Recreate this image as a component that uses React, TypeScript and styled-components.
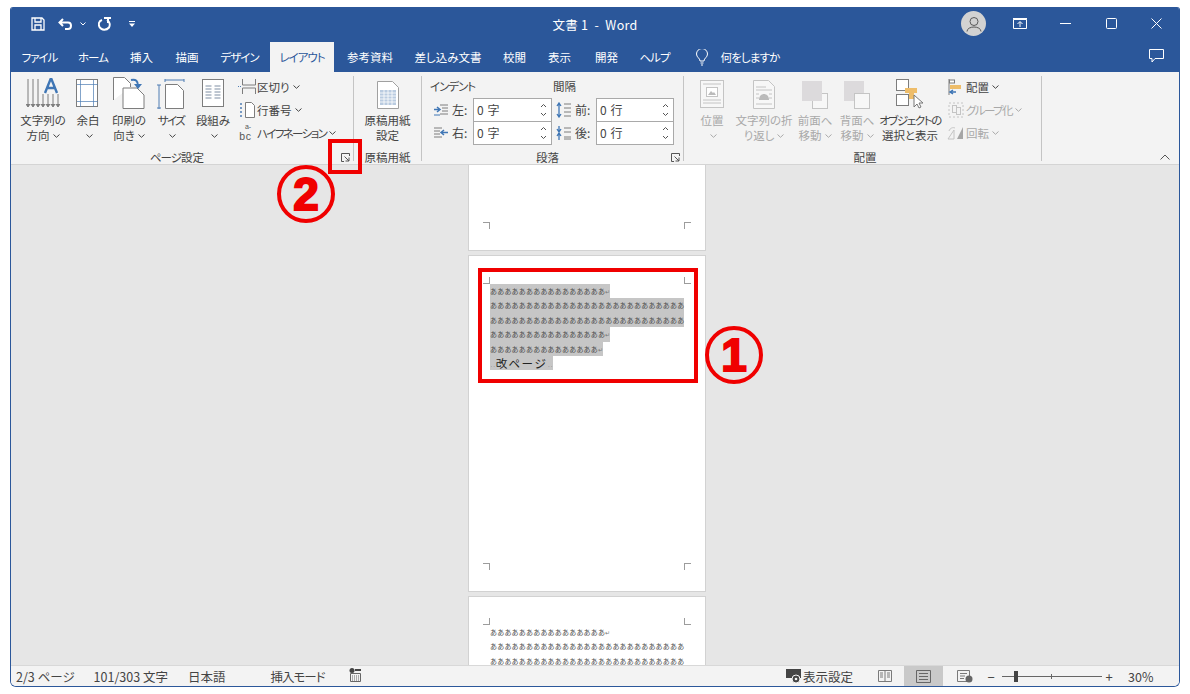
import React from "react";
import styled, { createGlobalStyle } from "styled-components";

const GlobalStyle = createGlobalStyle`
  html, body {
    margin: 0;
    background: #fff;
  }
  body {
    font-family: "Noto Sans CJK JP", "Liberation Sans", sans-serif;
    font-feature-settings: "palt";
    color: #444;
  }
`;

const Page = styled.div`
  width: 1190px;
  height: 694px;
  padding: 7px 10px 8px;
  box-sizing: border-box;
  position: relative;
  overflow: hidden;
`;

const Window = styled.div`
  height: 100%;
  display: flex;
  flex-direction: column;
  border: 1px solid #2b579a;
  border-top: 0;
  border-radius: 3px 3px 6px 6px;
  overflow: hidden;
`;

const TitleBar = styled.div`
  height: 33px;
  background: #2b579a;
  color: #fff;
  display: grid;
  grid-template-columns: 1fr auto 1fr;
  align-items: center;
  flex: none;
`;

const Qat = styled.div`
  display: flex;
  align-items: center;
  padding-left: 15px;
`;

const QatSlot = styled.div<{ $w: number }>`
  width: ${(p) => p.$w}px;
  display: flex;
  justify-content: center;
  align-items: center;
`;

const Title = styled.div`
  font-size: 12.5px;
  letter-spacing: 0.3px;
  white-space: pre;
  position: relative;
  top: 1px;
`;

const WinControls = styled.div`
  display: flex;
  justify-content: flex-end;
  align-items: center;
`;

const WinSlot = styled.div<{ $w: number }>`
  width: ${(p) => p.$w}px;
  display: flex;
  justify-content: center;
  align-items: center;
`;

const Avatar = styled.div`
  width: 25px;
  height: 25px;
  margin-right: 11px;
  border-radius: 50%;
  background: #d2d2d2;
  display: flex;
  align-items: center;
  justify-content: center;
`;

const TabBar = styled.div`
  height: 32px;
  background: #2b579a;
  display: flex;
  align-items: flex-end;
  flex: none;
  color: #fff;
  font-size: 11.5px;
`;

const Tab = styled.div<{ $active?: boolean; $w: number }>`
  width: ${(p) => p.$w}px;
  height: 30px;
  box-sizing: border-box;
  display: flex;
  align-items: center;
  justify-content: center;
  white-space: nowrap;
  flex: none;
  background: ${(p) => (p.$active ? "#f3f3f3" : "transparent")};
  color: ${(p) => (p.$active ? "#2b579a" : "#fff")};
`;

const BulbTab = styled(Tab)`
  padding-left: 8px;
`;

const CommentSlot = styled.div`
  margin-left: auto;
  width: 46px;
  height: 32px;
  display: flex;
  align-items: center;
  justify-content: center;
  align-self: flex-start;
`;

const Kana = styled.span<{ $s?: number }>`
  letter-spacing: ${(p) => p.$s ?? -1}px;
`;

const Ribbon = styled.div`
  height: 93px;
  flex: none;
  background: #f3f3f3;
  border-bottom: 1px solid #d4d4d4;
  box-sizing: border-box;
  display: flex;
  font-size: 11.5px;
`;

const Group = styled.div<{ $w: number; $pad?: number }>`
  width: ${(p) => p.$w}px;
  flex: none;
  box-sizing: border-box;
  margin: 4px 0 3px;
  padding-left: ${(p) => p.$pad ?? 0}px;
  border-right: 1px solid #c4c4c4;
  display: flex;
  flex-direction: column;
  position: relative;
`;

const GroupBody = styled.div`
  flex: 1;
  display: flex;
  min-height: 0;
`;

const GroupLabel = styled.div<{ $launcher?: boolean }>`
  height: 14px;
  line-height: 14px;
  margin-bottom: -3px;
  text-align: center;
  padding-right: ${(p) => (p.$launcher ? 18 : 0)}px;
  white-space: nowrap;
`;

const Launcher = styled.svg`
  position: absolute;
  right: 3px;
  bottom: -1px;
  width: 9px;
  height: 9px;
`;

const CollapseBtn = styled.svg`
  width: 10px;
  height: 6px;
  margin: auto 9px 4px auto;
`;

const Large = styled.div<{ $w: number; $off?: boolean }>`
  width: ${(p) => p.$w}px;
  flex: none;
  display: flex;
  flex-direction: column;
  align-items: center;
  color: ${(p) => (p.$off ? "#a9a9a9" : "#444")};
`;

const IconSlot = styled.div`
  height: 36px;
  box-sizing: border-box;
  padding-bottom: 3px;
  display: flex;
  align-items: flex-end;
  justify-content: center;
`;

const LargeLabel = styled.div`
  margin-top: 1px;
  line-height: 15px;
  text-align: center;
  white-space: nowrap;
`;

const ChevronSvg = styled.svg`
  width: 7px;
  height: 4px;
  margin-left: 3px;
  vertical-align: 2px;
`;

const SmallStack = styled.div<{ $left: number }>`
  margin-left: ${(p) => p.$left}px;
  margin-top: -1px;
  display: flex;
  flex-direction: column;
`;

const SmallRow = styled.div<{ $off?: boolean }>`
  height: 23px;
  display: flex;
  align-items: center;
  white-space: nowrap;
  color: ${(p) => (p.$off ? "#a9a9a9" : "#444")};
`;

const SmallIcon = styled.div`
  width: 20px;
  flex: none;
  display: flex;
  align-items: center;
  justify-content: center;
`;

const HyphenMark = styled.div`
  width: 17px;
  margin-right: 3px;
  display: flex;
  flex-direction: column;
  align-items: center;
  font-family: "Liberation Sans", sans-serif;
  color: #555;
`;

const HyphenTop = styled.span`
  font-size: 7px;
  margin-left: 5px;
`;

const HyphenBottom = styled.span`
  font-size: 10.5px;
  letter-spacing: 0.8px;
`;

const ParaGrid = styled.div`
  display: grid;
  grid-template-columns: 123px 121px;
  grid-template-rows: 22px 23px 23px;
`;

const ParaHead = styled.div`
  line-height: 21px;
`;

const ParaCell = styled.div`
  display: flex;
  align-items: center;
`;

const ParaIcon = styled.div`
  width: 22px;
  flex: none;
  display: flex;
  justify-content: center;
`;

const ParaName = styled.div`
  width: 21px;
  flex: none;
  font-size: 12px;
`;

const Field = styled.div<{ $w: number }>`
  width: ${(p) => p.$w}px;
  height: 24px;
  box-sizing: border-box;
  border: 1px solid #a9a9a9;
  background: #fff;
  display: flex;
  align-items: center;
  padding: 0 3px 0 3px;
  font-size: 12px;
  letter-spacing: 0.6px;
`;

const Spin = styled.svg`
  margin-left: auto;
  margin-right: 1px;
  width: 7px;
  height: 16px;
`;

const DocArea = styled.div`
  flex: 1;
  min-height: 0;
  background: #e6e6e6;
  overflow: hidden;
  display: flex;
  flex-direction: column;
  align-items: center;
  padding: 0 16px 0 0;
  gap: 6px;
`;

const Sheet = styled.div<{ $h?: number }>`
  width: 236px;
  flex: none;
  height: ${(p) => (p.$h ? `${p.$h}px` : "auto")};
  box-sizing: border-box;
  background: #fff;
  outline: 1px solid #d2d2d2;
  position: relative;
`;

const SheetText = styled.div<{ $top: number }>`
  padding: ${(p) => p.$top}px 0 0 21px;
`;

const TextLine = styled.div<{ $sel?: boolean }>`
  width: fit-content;
  max-width: 195px;
  height: 14.4px;
  line-height: 14.4px;
  font-size: 7px;
  letter-spacing: 0.2px;
  font-feature-settings: normal;
  white-space: nowrap;
  color: #4a4a4a;
  background: ${(p) => (p.$sel ? "#c6c6c6" : "transparent")};
`;

const BreakText = styled.span`
  font-size: 11.5px;
  letter-spacing: 1.5px;
  color: #222;
`;

const BreakDots = styled.span`
  font-size: 5px;
  letter-spacing: 0;
  color: #666;
`;

const ReturnMark = styled.span`
  font-size: 6px;
  color: #777;
`;

const Crop = styled.i<{ $pos: "tl" | "tr" | "bl" | "br" }>`
  position: absolute;
  width: 7px;
  height: 7px;
  box-sizing: border-box;
  border: 0 solid #9c9c9c;
  ${(p) => (p.$pos[1] === "l" ? "left: 14px; border-right-width: 1px;" : "right: 14px; border-left-width: 1px;")}
  ${(p) => (p.$pos[0] === "t" ? "top: 21px; border-bottom-width: 1px;" : "bottom: 21px; border-top-width: 1px;")}
`;

const RedBox = styled.div`
  position: absolute;
  box-sizing: border-box;
  border: 4px solid #f00000;
  pointer-events: none;
`;

const PageBox = styled(RedBox)`
  left: 9px;
  top: 12px;
  width: 220px;
  height: 115px;
`;

const LauncherBox = styled(RedBox)`
  left: 328px;
  top: 139px;
  width: 34px;
  height: 35px;
`;

const Badge = styled.div<{ $x: number; $y: number }>`
  position: absolute;
  left: ${(p) => p.$x}px;
  top: ${(p) => p.$y}px;
  width: 58px;
  height: 58px;
  box-sizing: border-box;
  border: 4px solid #f00000;
  border-radius: 50%;
  display: flex;
  align-items: center;
  justify-content: center;
  color: #f00000;
  font-family: "Liberation Sans", sans-serif;
  font-weight: 700;
  font-size: 46px;
  -webkit-text-stroke: 2px #f00000;
`;

const StatusBar = styled.div`
  height: 21px;
  flex: none;
  background: #f3f3f3;
  border-top: 1px solid #d8d8d8;
  box-sizing: border-box;
  display: flex;
  align-items: center;
  font-size: 12.5px;
  color: #444;
`;

const StatusText = styled.div<{ $left: number; $right?: number }>`
  margin-left: ${(p) => p.$left}px;
  margin-right: ${(p) => p.$right ?? 0}px;
  white-space: nowrap;
`;

const StatusRight = styled.div`
  margin-left: auto;
  display: flex;
  align-items: center;
  height: 100%;
`;

const ViewBtn = styled.div<{ $active?: boolean; $w: number }>`
  width: ${(p) => p.$w}px;
  height: 100%;
  display: flex;
  align-items: center;
  justify-content: center;
  background: ${(p) => (p.$active ? "#c9c9c9" : "transparent")};
`;

const ZoomTrack = styled.div`
  width: 100px;
  height: 1px;
  background: #666;
  position: relative;
  margin: 0 1px 0 7px;
`;

const ZoomThumb = styled.i`
  position: absolute;
  left: 12px;
  top: -5px;
  width: 4px;
  height: 11px;
  background: #444;
`;

const ZoomTick = styled.i`
  position: absolute;
  left: 49px;
  top: -2px;
  width: 1px;
  height: 5px;
  background: #666;
`;

const ZoomSign = styled.div<{ $w: number }>`
  width: ${(p) => p.$w}px;
  text-align: center;
  font-size: 13px;
`;

const Percent = styled.div`
  width: 64px;
  padding-left: 13px;
  box-sizing: border-box;
  font-size: 12.5px;
`;

const Chevron = () => (
  <ChevronSvg viewBox="0 0 7 4">
    <path d="M.5.5 3.5 3.3 6.5.5" fill="none" stroke="currentColor" />
  </ChevronSvg>
);

const B = "#4f7db3";
const G = "#7d7d7d";
const D = "#c4c4c4";

const LauncherIcon = () => (
  <Launcher viewBox="0 0 9 9" fill="none" stroke="#555">
    <path d="M8.5 3V.5H.5v8H3" />
    <path d="M3.5 3.5 8 8M8 4.500V8H4.500" />
  </Launcher>
);

const TextDirIcon = () => (
  <svg width="34" height="31" viewBox="0 0 34 31" fill="none">
    <path d="M2 1v27M7 1v27M12 1v27M17 16v12M22 16v12M27 16v12M32 16v12" stroke={G} />
    <path d="M0 26l2 3 2-3M5 26l2 3 2-3M10 26l2 3 2-3M15 26l2 3 2-3M20 26l2 3 2-3M25 26l2 3 2-3M30 26l2 3 2-3" stroke={G} fill={G} />
    <path d="M19 15 25 0l6 15M21 10h8" stroke="#3f76b5" strokeWidth="2.4" />
  </svg>
);

const MarginIcon = () => (
  <svg width="24" height="30" viewBox="0 0 24 30" fill="none">
    <rect x=".5" y=".5" width="21" height="27" fill="#fff" stroke={G} />
    <path d="M4.500 1v27M17.500 1v27M1 5.500h21M1 22.500h21" stroke={B} strokeOpacity=".7" />
  </svg>
);

const OrientationIcon = () => (
  <svg width="32" height="32" viewBox="0 0 32 32" fill="none">
    <path d="M.5 23V.5h11l6 6V10" fill="#fff" stroke={G} />
    <path d="M10 31.500V11h14l7 7v13.500z" fill="#fff" stroke={G} />
    <path d="M18 3c5-1 7 1 7 6" stroke="#3f76b5" strokeWidth="2" />
    <path d="M21 7h8l-4 5z" fill="#3f76b5" />
  </svg>
);

const SizeIcon = () => (
  <svg width="28" height="30" viewBox="0 0 28 30" fill="none">
    <path d="M8.500 5.500h12l6 6v18h-18z" fill="#fff" stroke={G} />
    <path d="M8 1h19M8 0v3M27 0v3M2 6v24M0 6h4M0 29h4" stroke={B} />
  </svg>
);

const ColumnsIcon = () => (
  <svg width="22" height="30" viewBox="0 0 22 30" fill="none">
    <rect x=".5" y=".5" width="21" height="27" fill="#fff" stroke={G} />
    <path d="M3.500 7h6M12.500 7h6M3.500 10h6M12.500 10h6M3.500 13h6M12.500 13h6M3.500 16h6M12.500 16h6M3.500 19h6M12.500 19h6" stroke="#7f8ea3" />
  </svg>
);

const BreakIcon = () => (
  <svg width="18" height="16" viewBox="0 0 18 16" fill="none">
    <path d="M4.500 0v6h13V0M4.500 15V9h13v6" stroke={G} />
    <path d="M0 7.500h3" stroke={B} strokeDasharray="1 1" />
  </svg>
);

const LineNoIcon = () => (
  <svg width="16" height="16" viewBox="0 0 16 16" fill="none">
    <path d="M6.500.5h6l3 3v12h-9z" fill="#fff" stroke={G} />
    <path d="M2 1v2M2 5v2M2 9v2M2 13v2" stroke={B} strokeWidth="1.500" />
  </svg>
);

const GenkoIcon = () => (
  <svg width="22" height="28" viewBox="0 0 22 28">
    <path d="M.5.5h15l6 6v21H.5z" fill="#fff" stroke="#a0a0a0" />
    <path d="M3 9h16v15H3z" fill="#b9cbe0" />
    <path d="M3 12h16M3 15h16M3 18h16M3 21h16M7 9v15M11 9v15M15 9v15" stroke="#fff" strokeWidth=".8" />
  </svg>
);

const ParaArrow = ({ kind }: { kind: "left" | "right" | "before" | "after" }) => (
  <svg width="16" height="16" viewBox="0 0 16 16" fill="none">
    {kind === "left" && (
      <>
        <path d="M7 3h8M9 6h6M9 9h6M7 12h8" stroke={G} />
        <path d="M1 7.500h5M4 5l3 2.500L4 10" stroke="#3f76b5" strokeWidth="1.500" />
        <path d="M1 13h6" stroke="#3f76b5" />
      </>
    )}
    {kind === "right" && (
      <>
        <path d="M1 3h8M1 6h6M1 9h6M1 12h8" stroke={G} />
        <path d="M15 7.500h-6M11 5 8 7.500l3 2.500" stroke="#3f76b5" strokeWidth="1.500" />
      </>
    )}
    {kind === "before" && (
      <>
        <path d="M8 2h7M8 6h7M8 10h7M8 14h7" stroke={G} />
        <path d="M3 2v13M1 4l2-3 2 3M1 12l2 3 2-3" stroke="#3f76b5" strokeWidth="1.300" />
      </>
    )}
    {kind === "after" && (
      <>
        <path d="M8 3h7M8 7h7M8 12h7M8 14h7" stroke={G} />
        <path d="M3 1v5M3 9v6M1 4l2 3 2-3M1 11l2-3 2 3" stroke="#3f76b5" strokeWidth="1.300" />
      </>
    )}
  </svg>
);

const SpinIcon = () => (
  <Spin viewBox="0 0 7 16" fill="none" stroke="#555">
    <path d="M1 5 3.500 2.500 6 5M1 11l2.500 2.500L6 11" />
  </Spin>
);

const PositionIcon = () => (
  <svg width="24" height="29" viewBox="0 0 24 29" fill="none">
    <rect x=".5" y=".5" width="23" height="27" fill="#f7f7f7" stroke={D} />
    <path d="M3 4h18M3 20h18M3 23h18" stroke={D} />
    <rect x="6.500" y="7.500" width="11" height="9" fill="#fff" stroke={D} />
    <path d="M8 15l3-4 2 2 1-1 2 3z" fill="#bbb" />
  </svg>
);

const WrapIcon = () => (
  <svg width="22" height="29" viewBox="0 0 22 29" fill="none">
    <path d="M.5.5h15l6 6v22H.5z" fill="#f7f7f7" stroke={D} />
    <path d="M3 7h10M3 10h16M3 24h16M3 14h3M16 14h3M3 18h3M16 18h3" stroke={D} />
    <path d="M6 20c0-8 10-8 10 0z" fill="#bbb" />
  </svg>
);

const ForwardIcon = ({ back }: { back?: boolean }) => (
  <svg width="26" height="28" viewBox="0 0 26 28">
    {back ? (
      <>
        <rect x="0" y="0" width="20" height="20" fill="#dcdadc" />
        <rect x="10.500" y="12.500" width="15" height="15" fill="#f7f7f7" stroke={D} />
      </>
    ) : (
      <>
        <rect x="10.500" y="12.500" width="15" height="15" fill="#f7f7f7" stroke={D} />
        <rect x="0" y="0" width="20" height="20" fill="#dcdadc" />
      </>
    )}
  </svg>
);

const SelectionIcon = () => (
  <svg width="28" height="30" viewBox="0 0 28 30" fill="none">
    <rect x=".5" y=".5" width="12" height="11" fill="#fff" stroke={G} />
    <rect x=".5" y="15.500" width="12" height="11" fill="#fff" stroke={G} />
    <path d="M9 9h12v5h-3v6h-5v-6H9z" fill="#eebd6a" />
    <path d="M18 16v12l3-3 2 4 2-1-2-4h4z" fill="#fff" stroke="#777" />
  </svg>
);

const AlignIcon = () => (
  <svg width="16" height="16" viewBox="0 0 16 16" fill="none">
    <path d="M1 0v16" stroke={G} />
    <rect x="1.500" y="1" width="5" height="3" fill="#fff" stroke={G} />
    <rect x="2" y="6" width="11" height="4" fill="#eebd6a" />
    <path d="M8 13H2M5 11l-3 2 3 2" stroke="#3f76b5" strokeWidth="1.500" />
  </svg>
);

const GroupIcon = () => (
  <svg width="16" height="16" viewBox="0 0 16 16" fill="none" stroke={D}>
    <path d="M1 1h14v14H1z" strokeDasharray="2 2" />
    <rect x="4.500" y="3.500" width="4" height="7" />
    <rect x="8.500" y="5.500" width="4" height="7" />
  </svg>
);

const RotateIcon = () => (
  <svg width="18" height="14" viewBox="0 0 18 14" fill="none">
    <path d="M1 13 7 4v9z" stroke={D} />
    <path d="M10 13l6-12v12z" fill="#a6a6a6" />
    <path d="M2 5c1-3 4-4 6-3" stroke={D} />
  </svg>
);

const ReadIcon = () => (
  <svg width="14" height="12" viewBox="0 0 14 12" fill="none" stroke="#7a7a7a">
    <path d="M.5.500h13v11H.5zM7 .5v11M2 3h3M2 5h3M2 7h3M9 3h3M9 5h3M9 7h3" />
  </svg>
);

const PrintIcon = () => (
  <svg width="15" height="13" viewBox="0 0 15 13" fill="none" stroke="#666">
    <path d="M.5.500h14v12H.5zM3 3.500h9M3 6.500h9M3 9.500h9" />
  </svg>
);

const WebIcon = () => (
  <svg width="16" height="13" viewBox="0 0 16 13" fill="none">
    <path d="M.5.500h12v11H.5zM3 3.500h7M3 6h5M3 8.500h4" stroke="#7a7a7a" />
    <circle cx="12" cy="9" r="3.500" fill="#666" />
  </svg>
);

const ViewSettingIcon = () => (
  <svg width="16" height="15" viewBox="0 0 16 15">
    <rect x="0" y="0" width="15" height="9" fill="#444" />
    <circle cx="10" cy="10" r="4" fill="#444" stroke="#f3f3f3" />
    <circle cx="10" cy="10" r="1.300" fill="#f3f3f3" />
  </svg>
);

const MacroIcon = () => (
  <svg width="13" height="14" viewBox="0 0 13 14" fill="none">
    <circle cx="3" cy="2.500" r="2.500" fill="#444" />
    <path d="M6 1h6v2H6z" fill="#444" />
    <path d="M1.500 5.500h10v8h-10z" stroke="#666" />
    <path d="M3 8h7M3 10h7M3 12h7" stroke="#666" strokeDasharray="1 1" />
  </svg>
);

const longLine = "あ".repeat(27);

const TextBlock = ({ sel }: { sel?: boolean }) => (
  <>
    <TextLine $sel={sel}>
      {"あ".repeat(16)}
      <ReturnMark>↵</ReturnMark>
    </TextLine>
    <TextLine $sel={sel}>{longLine}</TextLine>
    <TextLine $sel={sel}>{longLine}</TextLine>
  </>
);

const App = () => {
  return (
    <Page>
      <GlobalStyle />
      <Window>
        <TitleBar>
          <Qat>
            <QatSlot $w={24}>
              <svg width="14" height="14" viewBox="0 0 14 14" fill="none" stroke="#fff" strokeWidth="1.300">
                <path d="M1 1h10l2 2v10H1zM4 1v4h6V1M4 13V8h6v5" />
              </svg>
            </QatSlot>
            <QatSlot $w={30}>
              <svg width="15" height="12" viewBox="0 0 15 12" fill="none" stroke="#fff" strokeWidth="2">
                <path d="M1.500 4.500H10c4 0 4 6.500 0 6.500H7M5 1 1.500 4.500 5 8" />
              </svg>
            </QatSlot>
            <QatSlot $w={6}>
              <svg width="6" height="4" viewBox="0 0 6 4" fill="none" stroke="#fff">
                <path d="M.5.5 3 3 5.500.5" />
              </svg>
            </QatSlot>
            <QatSlot $w={36}>
              <svg width="13" height="14" viewBox="0 0 13 14" fill="none" stroke="#fff" strokeWidth="2">
                <path d="M4 3C1 4 0 7 1.500 10c2 3.500 7 3.500 9.500.5 1.500-3 .5-6-2-7.500M6 1h7M10 1v5" />
              </svg>
            </QatSlot>
            <QatSlot $w={20}>
              <svg width="6" height="6" viewBox="0 0 6 6" fill="#fff">
                <path d="M0 0h6v1H0zM0 2.500h6L3 6z" />
              </svg>
            </QatSlot>
          </Qat>
          <Title>文書 1  -  Word</Title>
          <WinControls>
            <Avatar>
              <svg width="16" height="16" viewBox="0 0 16 16" fill="none" stroke="#5a5a5a">
                <circle cx="8" cy="5.500" r="4" />
                <path d="M1 15.500c0-6 14-6 14 0" />
              </svg>
            </Avatar>
            <WinSlot $w={45}>
              <svg width="14" height="11" viewBox="0 0 14 11" fill="none" stroke="#fff">
                <path d="M.5 1.500h13v9H.5zM7 9V4M4.500 6 7 3.500 9.500 6" />
                <path d="M0 .5h14" strokeWidth="2" />
              </svg>
            </WinSlot>
            <WinSlot $w={47}>
              <svg width="11" height="1" viewBox="0 0 11 1">
                <path d="M0 0h11v1H0z" fill="#fff" />
              </svg>
            </WinSlot>
            <WinSlot $w={44}>
              <svg width="11" height="11" viewBox="0 0 11 11" fill="none" stroke="#fff">
                <rect x=".5" y=".5" width="10" height="10" rx="1" />
              </svg>
            </WinSlot>
            <WinSlot $w={46}>
              <svg width="11" height="11" viewBox="0 0 11 11" fill="none" stroke="#fff">
                <path d="M.5.5l10 10M10.500.5l-10 10" />
              </svg>
            </WinSlot>
          </WinControls>
        </TitleBar>

        <TabBar>
          <Tab $w={57}><Kana>ファイル</Kana></Tab>
          <Tab $w={50}><Kana>ホーム</Kana></Tab>
          <Tab $w={47}>挿入</Tab>
          <Tab $w={44}>描画</Tab>
          <Tab $w={61}><Kana>デザイン</Kana></Tab>
          <Tab $w={64} $active><Kana>レイアウト</Kana></Tab>
          <Tab $w={72}>参考資料</Tab>
          <Tab $w={84}>差し込み文書</Tab>
          <Tab $w={49}>校閲</Tab>
          <Tab $w={41}>表示</Tab>
          <Tab $w={53}>開発</Tab>
          <Tab $w={43}><Kana>ヘルプ</Kana></Tab>
          <BulbTab $w={44}>
            <svg width="12" height="17" viewBox="0 0 12 17" fill="none" stroke="#fff">
              <path d="M4 12c0-3-3.500-3.500-3.500-7a5.500 5.500 0 0 1 11 0c0 3.500-3.500 4-3.500 7zM4.500 14h3M5 16h2" />
            </svg>
          </BulbTab>
          <Tab $w={60}><Kana $s={-0.8}>何をしますか</Kana></Tab>
          <CommentSlot>
            <svg width="15" height="14" viewBox="0 0 15 14" fill="none" stroke="#fff">
              <path d="M.5.500h14v9H6l-3 3.500V9.500H.5z" />
            </svg>
          </CommentSlot>
        </TabBar>

        <Ribbon>
          <Group $w={343} $pad={8}>
            <GroupBody>
              <Large $w={48}>
                <IconSlot><TextDirIcon /></IconSlot>
                <LargeLabel>文字列の<br />方向<Chevron /></LargeLabel>
              </Large>
              <Large $w={42}>
                <IconSlot><MarginIcon /></IconSlot>
                <LargeLabel>余白<br /><Chevron /></LargeLabel>
              </Large>
              <Large $w={40}>
                <IconSlot><OrientationIcon /></IconSlot>
                <LargeLabel>印刷の<br />向き<Chevron /></LargeLabel>
              </Large>
              <Large $w={44}>
                <IconSlot><SizeIcon /></IconSlot>
                <LargeLabel><Kana $s={-1.6}>サイズ</Kana><br /><Chevron /></LargeLabel>
              </Large>
              <Large $w={40}>
                <IconSlot><ColumnsIcon /></IconSlot>
                <LargeLabel>段組み<br /><Chevron /></LargeLabel>
              </Large>
              <SmallStack $left={4}>
                <SmallRow><SmallIcon><BreakIcon /></SmallIcon>区切り<Chevron /></SmallRow>
                <SmallRow><SmallIcon><LineNoIcon /></SmallIcon>行番号<Chevron /></SmallRow>
                <SmallRow>
                  <HyphenMark>
                    <HyphenTop>a-</HyphenTop>
                    <HyphenBottom>bc</HyphenBottom>
                  </HyphenMark>
                  <Kana $s={-1.6}>ハイフネーション</Kana><Chevron />
                </SmallRow>
              </SmallStack>
            </GroupBody>
            <GroupLabel $launcher><Kana>ページ</Kana>設定</GroupLabel>
            <LauncherIcon />
          </Group>

          <Group $w={68}>
            <GroupBody>
              <Large $w={67}>
                <IconSlot><GenkoIcon /></IconSlot>
                <LargeLabel>原稿用紙<br />設定</LargeLabel>
              </Large>
            </GroupBody>
            <GroupLabel>原稿用紙</GroupLabel>
          </Group>

          <Group $w={262} $pad={8}>
            <GroupBody>
              <ParaGrid>
                <ParaHead><Kana>インデント</Kana></ParaHead>
                <ParaHead>間隔</ParaHead>
                <ParaCell>
                  <ParaIcon><ParaArrow kind="left" /></ParaIcon>
                  <ParaName>左:</ParaName>
                  <Field $w={79}>0 字<SpinIcon /></Field>
                </ParaCell>
                <ParaCell>
                  <ParaIcon><ParaArrow kind="before" /></ParaIcon>
                  <ParaName>前:</ParaName>
                  <Field $w={78}>0 行<SpinIcon /></Field>
                </ParaCell>
                <ParaCell>
                  <ParaIcon><ParaArrow kind="right" /></ParaIcon>
                  <ParaName>右:</ParaName>
                  <Field $w={79}>0 字<SpinIcon /></Field>
                </ParaCell>
                <ParaCell>
                  <ParaIcon><ParaArrow kind="after" /></ParaIcon>
                  <ParaName>後:</ParaName>
                  <Field $w={78}>0 行<SpinIcon /></Field>
                </ParaCell>
              </ParaGrid>
            </GroupBody>
            <GroupLabel $launcher>段落</GroupLabel>
            <LauncherIcon />
          </Group>

          <Group $w={358} $pad={5}>
            <GroupBody>
              <Large $w={46} $off>
                <IconSlot><PositionIcon /></IconSlot>
                <LargeLabel>位置<br /><Chevron /></LargeLabel>
              </Large>
              <Large $w={58} $off>
                <IconSlot><WrapIcon /></IconSlot>
                <LargeLabel>文字列の折<br />り返し<Chevron /></LargeLabel>
              </Large>
              <Large $w={44} $off>
                <IconSlot><ForwardIcon /></IconSlot>
                <LargeLabel>前面へ<br />移動<Chevron /></LargeLabel>
              </Large>
              <Large $w={40} $off>
                <IconSlot><ForwardIcon back /></IconSlot>
                <LargeLabel>背面へ<br />移動<Chevron /></LargeLabel>
              </Large>
              <Large $w={66}>
                <IconSlot><SelectionIcon /></IconSlot>
                <LargeLabel><Kana $s={-1.4}>オブジェクトの</Kana><br />選択と表示</LargeLabel>
              </Large>
              <SmallStack $left={3}>
                <SmallRow><SmallIcon><AlignIcon /></SmallIcon>配置<Chevron /></SmallRow>
                <SmallRow $off><SmallIcon><GroupIcon /></SmallIcon><Kana $s={-1.6}>グループ化</Kana><Chevron /></SmallRow>
                <SmallRow $off><SmallIcon><RotateIcon /></SmallIcon>回転<Chevron /></SmallRow>
              </SmallStack>
            </GroupBody>
            <GroupLabel>配置</GroupLabel>
          </Group>

          <CollapseBtn viewBox="0 0 10 6" fill="none" stroke="#555">
            <path d="M.5 5.500 5 1l4.500 4.500" />
          </CollapseBtn>
        </Ribbon>

        <DocArea>
          <Sheet $h={85}>
            <Crop $pos="bl" />
            <Crop $pos="br" />
          </Sheet>
          <Sheet $h={335}>
            <Crop $pos="tl" />
            <Crop $pos="tr" />
            <Crop $pos="bl" />
            <Crop $pos="br" />
            <SheetText $top={28}>
              <TextBlock sel />
              <TextLine $sel>
                {"あ".repeat(16)}
                <ReturnMark>↵</ReturnMark>
              </TextLine>
              <TextLine $sel>
                {"あ".repeat(15)}
                <ReturnMark>↵</ReturnMark>
              </TextLine>
              <TextLine $sel>
                <BreakDots>··</BreakDots>
                <BreakText>改ページ</BreakText>
                <BreakDots>··</BreakDots>
              </TextLine>
            </SheetText>
            <PageBox />
          </Sheet>
          <Sheet $h={200}>
            <Crop $pos="tl" />
            <Crop $pos="tr" />
            <SheetText $top={28}>
              <TextBlock />
            </SheetText>
          </Sheet>
        </DocArea>

        <StatusBar>
          <StatusText $left={5}>2/3 ページ</StatusText>
          <StatusText $left={19}>101/303 文字</StatusText>
          <StatusText $left={20}>日本語</StatusText>
          <StatusText $left={45}><Kana>挿入モード</Kana></StatusText>
          <StatusText $left={24}><MacroIcon /></StatusText>
          <StatusRight>
            <ViewSettingIcon />
            <StatusText $left={1} $right={13}>表示設定</StatusText>
            <ViewBtn $w={38}><ReadIcon /></ViewBtn>
            <ViewBtn $w={39} $active><PrintIcon /></ViewBtn>
            <ViewBtn $w={44}><WebIcon /></ViewBtn>
            <ZoomSign $w={8}>−</ZoomSign>
            <ZoomTrack><ZoomThumb /><ZoomTick /></ZoomTrack>
            <ZoomSign $w={12}>+</ZoomSign>
            <Percent>30%</Percent>
          </StatusRight>
        </StatusBar>
      </Window>

      <LauncherBox />
      <Badge $x={277} $y={165}>2</Badge>
      <Badge $x={705} $y={326}>1</Badge>
    </Page>
  );
};

export default App;
